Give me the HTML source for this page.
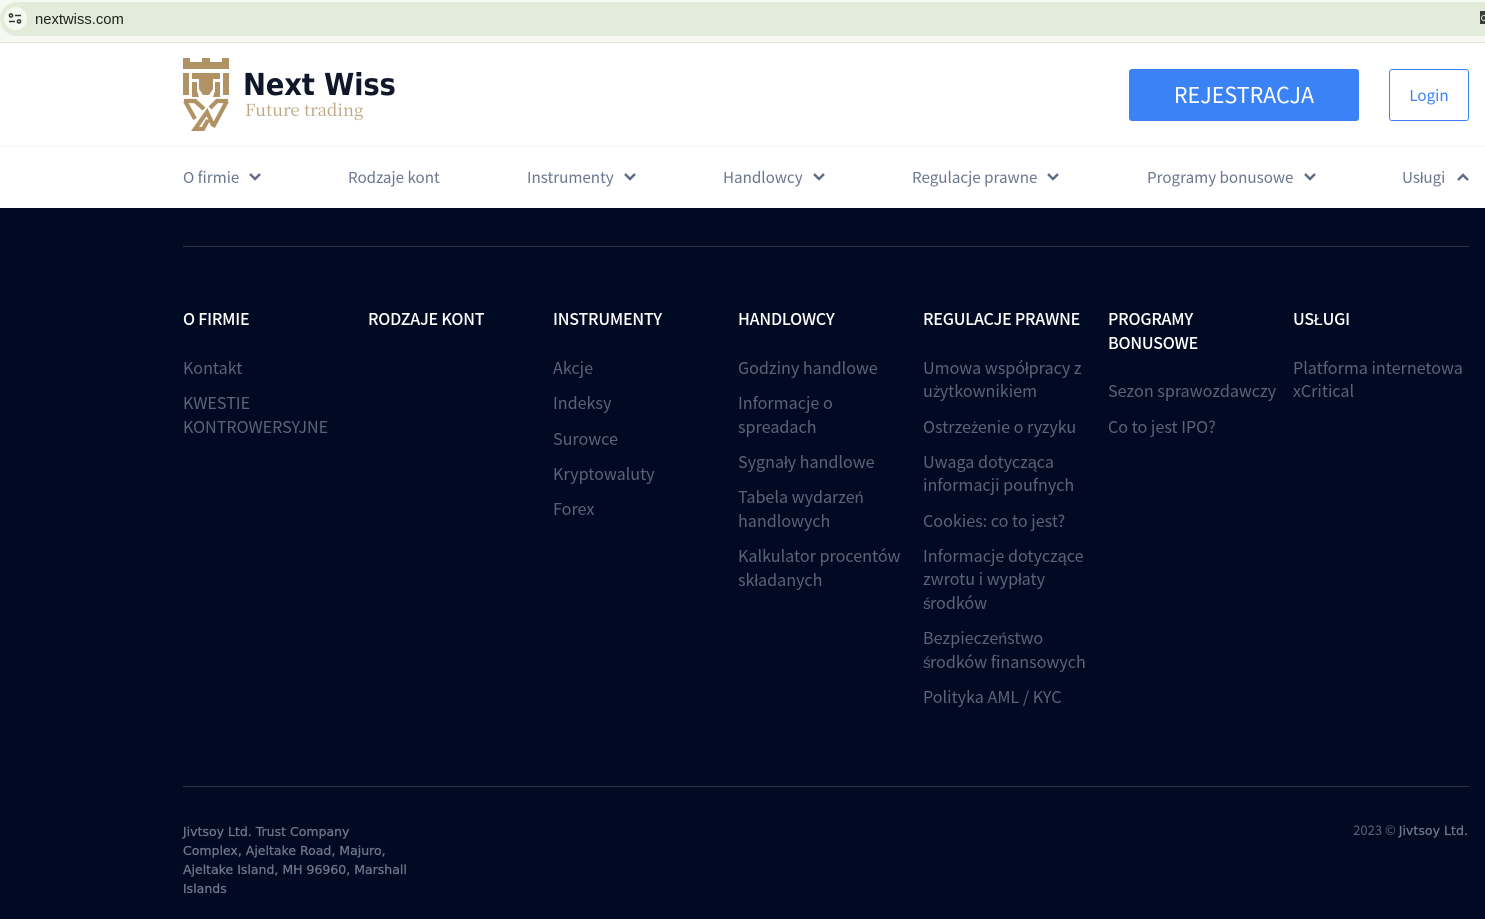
<!DOCTYPE html>
<html><head><meta charset="utf-8"><title>Next Wiss</title>
<style>
html,body{margin:0;padding:0;width:1485px;height:919px;overflow:hidden;background:#000a23}
body{position:relative;font-family:"Noto Sans CJK JP","Liberation Sans",sans-serif}
.a{position:absolute;white-space:nowrap}
.chrome{left:0;top:0;width:1485px;height:42px;background:#f6f9f1;border-bottom:1px solid #e2e4da}
.pill{left:0;top:2px;width:1500px;height:34px;background:#e3ebdb;border-radius:17px}
.white{left:0;top:43px;width:1485px;height:165px;background:#fff}
.sep{left:0;top:146px;width:1485px;height:1px;background:#f6f5ef}
.nav{top:166px;font-size:15.2px;line-height:23px;color:#6b7690}
.h{font-size:16px;line-height:24px;color:#fff;font-weight:500;letter-spacing:-.2px}
.l{font-size:16.15px;line-height:23.5px;color:#5a6478}
.d{font-family:"Liberation Sans",sans-serif;font-size:15.5px;letter-spacing:-.8px;line-height:0}
.n{font-family:"Liberation Sans",sans-serif;font-size:16px;line-height:0}
.rule{left:183px;width:1286px;height:1px;background:#2c3345}
.addr{font-family:"DejaVu Sans",sans-serif;font-size:12.5px;line-height:19px;color:#6f788b;-webkit-text-stroke:.25px #6f788b}
</style></head><body>
<div class="a chrome"></div><div class="a pill"></div>
<div class="a" style="left:4px;top:7px;width:23px;height:23px;border-radius:50%;background:#f6f9f1"></div>
<svg class="a" style="left:8px;top:13px" width="14" height="12" viewBox="0 0 14 12" fill="none" stroke="#30352d" stroke-width="1.5"><circle cx="3" cy="2.5" r="1.6"/><path d="M7 2.5h6M1 8.5h6"/><circle cx="11" cy="8.5" r="1.6"/></svg>
<div class="a" style="left:35px;top:10px;font-size:14.8px;line-height:21px;color:#20241e;font-family:'Liberation Sans',sans-serif">nextwiss.com</div>
<div class="a" style="left:1480px;top:11px;width:5px;height:13px;background:#3a3d38"></div>
<div class="a" style="left:1481px;top:15px;width:4px;height:4px;border:1px solid #e3ebdb;border-radius:50%"></div>

<div class="a white"></div><div class="a sep"></div>
<svg class="a" style="left:183px;top:58px" width="46" height="73" viewBox="0 0 46 73" fill="#b09265">
<path d="M0 0h7v4h12V0h8v4h12V0h7v11H0z"/>
<path d="M0 15h6v22H0zM40 15h6v22h-6z"/>
<path d="M9 15h28v6h-7v10l-4 6h-6l-4-6V21H9z"/>
<path d="M9 24h5v9l2 6H9zM37 24h-5v9l-2 6h7z"/>
<g fill="none" stroke="#b09265" stroke-width="4.2">
<path d="M1 43H12L21 51"/>
<path d="M2 43L12 61"/>
<path d="M45 43H34L27 50"/>
<path d="M44 43L30 69"/>
<path d="M30 67L24 54L12 71H20L25 62"/>
</g>
</svg>
<div class="a" style="left:243px;top:65px;font-family:'DejaVu Sans',sans-serif;font-weight:700;font-size:30px;line-height:42px;color:#0f1729;letter-spacing:-.2px;transform-origin:0 50%;transform:scaleX(.915)">Next Wiss</div>
<div class="a" style="left:245px;top:97px;font-family:'Noto Serif CJK JP','Noto Serif CJK SC',serif;font-size:16.7px;line-height:25px;color:#bca47e">Future trading</div>
<div class="a" style="left:1129px;top:69px;width:230px;height:52px;background:#3b82f6;border-radius:3px"></div>
<div class="a" style="left:1129px;top:69px;width:230px;height:52px;color:#fff;font-size:21.5px;line-height:52px;text-align:center">REJESTRACJA</div>
<div class="a" style="left:1389px;top:69px;width:78px;height:50px;border:1px solid #3b82f6;border-radius:3px;color:#3b82f6;font-size:15.2px;line-height:50px;text-align:center">Login</div>

<div class="a nav" style="left:183px">O firmie</div>
<div class="a nav" style="left:348px">Rodzaje kont</div>
<div class="a nav" style="left:527px">Instrumenty</div>
<div class="a nav" style="left:723px">Handlowcy</div>
<div class="a nav" style="left:912px">Regulacje prawne</div>
<div class="a nav" style="left:1147px">Programy bonusowe</div>
<div class="a nav" style="left:1402px">Usługi</div>
<svg class="a" style="left:0;top:170px" width="1485" height="14" fill="none" stroke="#5f6b85" stroke-width="2.4">
<path d="M250 4l5 5 5-5M625 4l5 5 5-5M814 4l5 5 5-5M1048 4l5 5 5-5M1305 4l5 5 5-5M1458 10l5-5 5 5"/></svg>

<div class="a rule" style="top:246px"></div>

<div class="a h" style="left:183px;top:306px">O FIRMIE</div>
<div class="a h" style="left:368px;top:306px">RODZAJE KONT</div>
<div class="a h" style="left:553px;top:306px">INSTRUMENTY</div>
<div class="a h" style="left:738px;top:306px">HANDLOWCY</div>
<div class="a h" style="left:923px;top:306px">REGULACJE PRAWNE</div>
<div class="a h" style="left:1108px;top:306px">PROGRAMY<br>BONUSOWE</div>
<div class="a h" style="left:1293px;top:306px">USŁUGI</div>

<div class="a l" style="left:183px;top:356px">Kontakt</div>
<div class="a l" style="left:183px;top:391px">KWESTIE<br>KONTROWERSYJNE</div>

<div class="a l" style="left:553px;top:356px">Akcje</div>
<div class="a l" style="left:553px;top:391px">Indeksy</div>
<div class="a l" style="left:553px;top:427px">Surowce</div>
<div class="a l" style="left:553px;top:462px">Kryptowaluty</div>
<div class="a l" style="left:553px;top:497px">Forex</div>

<div class="a l" style="left:738px;top:356px">Godziny handlowe</div>
<div class="a l" style="left:738px;top:391px">Informacje o<br>spreadach</div>
<div class="a l" style="left:738px;top:450px">Sygnały handlowe</div>
<div class="a l" style="left:738px;top:485px">Tabela wydarze<span class="n">ń</span><br>handlowych</div>
<div class="a l" style="left:738px;top:544px">Kalkulator procentów<br>składanych</div>

<div class="a l" style="left:923px;top:356px;line-height:23px">Umowa współpracy z<br>u<span class="d">ż</span>ytkownikiem</div>
<div class="a l" style="left:923px;top:415px">Ostrze<span class="d">ż</span>enie o ryzyku</div>
<div class="a l" style="left:923px;top:450px;line-height:23px">Uwaga dotycząca<br>informacji poufnych</div>
<div class="a l" style="left:923px;top:509px">Cookies: co to jest?</div>
<div class="a l" style="left:923px;top:544px;line-height:23.4px">Informacje dotyczące<br>zwrotu i wypłaty<br><span class="d">ś</span>rodków</div>
<div class="a l" style="left:923px;top:626px">Bezpiecze<span class="n">ń</span>stwo<br><span class="d">ś</span>rodków finansowych</div>
<div class="a l" style="left:923px;top:685px">Polityka AML / KYC</div>

<div class="a l" style="left:1108px;top:379px">Sezon sprawozdawczy</div>
<div class="a l" style="left:1108px;top:415px">Co to jest IPO?</div>

<div class="a l" style="left:1293px;top:356px;line-height:23px">Platforma internetowa<br>xCritical</div>

<div class="a rule" style="top:786px"></div>
<div class="a addr" style="left:183px;top:822px">Jivtsoy Ltd. Trust Company<br>Complex, Ajeltake Road, Majuro,<br>Ajeltake Island, MH 96960, Marshall<br>Islands</div>
<div class="a" style="right:17px;top:820px;font-size:13px;line-height:19px;color:#5a6478">2023 © <span style="font-family:'DejaVu Sans',sans-serif;font-size:12.6px;color:#6f788b;-webkit-text-stroke:.25px #6f788b">Jivtsoy Ltd.</span></div>
</body></html>
